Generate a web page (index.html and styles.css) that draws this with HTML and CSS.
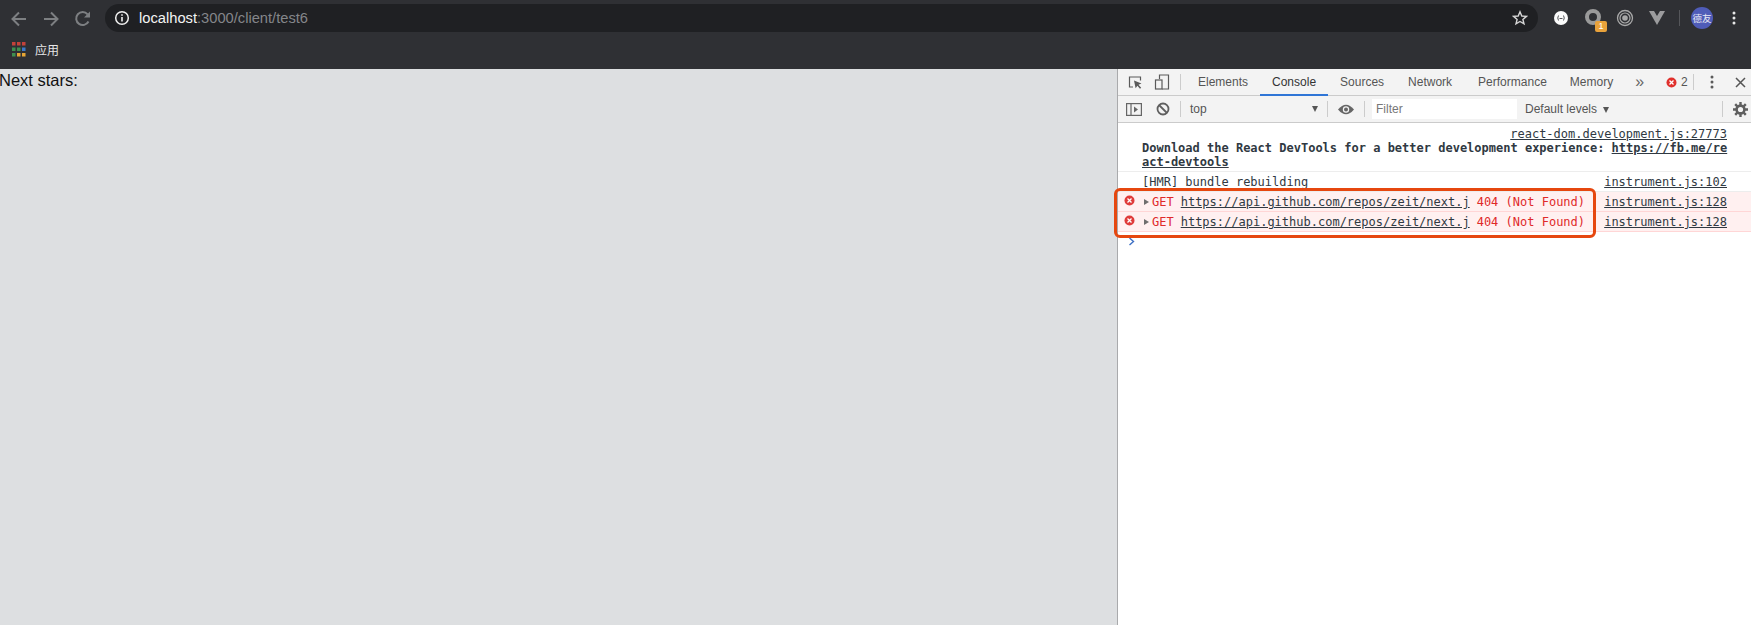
FILE: index.html
```html
<!DOCTYPE html>
<html lang="zh">
<head>
<meta charset="utf-8">
<title>localhost:3000/client/test6</title>
<link rel="stylesheet" href="styles.css">
</head>
<body>
<header class="chrome">
  <div class="toolbar">
    <svg class="nav nav-back" width="20" height="20" viewBox="0 0 20 20"><path d="M17 10H4M10 3.500L3.500 10l6.500 6.500" fill="none" stroke="#7d7f82" stroke-width="2"/></svg>
    <svg class="nav nav-fwd" width="20" height="20" viewBox="0 0 20 20"><path d="M3 10h13M10 3.500l6.500 6.500-6.500 6.500" fill="none" stroke="#7d7f82" stroke-width="2"/></svg>
    <svg class="nav nav-reload" width="20" height="20" viewBox="0 0 20 20"><path d="M15.500 12.500A6.500 6.500 0 1 1 14.600 5.300" fill="none" stroke="#7d7f82" stroke-width="2"/><path d="M17 2.500V8.500H11Z" fill="#7d7f82"/></svg>
    <div class="omnibox">
      <svg class="info" width="16" height="16" viewBox="0 0 16 16"><circle cx="8" cy="8" r="6.300" fill="none" stroke="#f0f0f0" stroke-width="1.500"/><path d="M8 7v4.500M8 4.300v1.500" stroke="#f0f0f0" stroke-width="1.600"/></svg>
      <span class="url"><span class="host">localhost</span>:3000/client/test6</span>
      <svg class="star" width="16" height="16" viewBox="0 0 16 16"><path d="M8 1.800l1.800 4.200 4.600.4-3.500 3 1.100 4.500L8 11.500l-4 2.400 1.100-4.500-3.500-3 4.600-.4z" fill="none" stroke="#d6d6d6" stroke-width="1.400"/></svg>
    </div>
    <div class="extensions">
      <svg class="ext" width="16" height="16" viewBox="0 0 16 16"><circle cx="8" cy="8" r="7" fill="#fbfbfb"/><path d="M5.500 5.500Q4 8 5.500 10.500M10.500 5.500Q12 8 10.500 10.500M6.500 8.500h3" fill="none" stroke="#55565a" stroke-width="1"/></svg>
      <span class="ext ext-badge">
        <svg width="18" height="18" viewBox="0 0 18 18"><circle cx="8" cy="8" r="6" fill="none" stroke="#9a9a9a" stroke-width="4"/></svg>
        <span class="badge">1</span>
      </span>
      <svg class="ext ext-target" width="18" height="18" viewBox="0 0 18 18"><g fill="none" stroke="#a8a8a8"><circle cx="9" cy="9" r="7.500" stroke-width="1.300"/><circle cx="9" cy="9" r="5" stroke-width="1.200"/></g><circle cx="9" cy="9" r="2.800" fill="#a8a8a8"/></svg>
      <svg class="ext" width="18" height="16" viewBox="0 0 18 16"><path d="M1 1h16L9 15z" fill="#9c9c9e"/><path d="M6 1h6L9 6z" fill="#2f3034"/></svg>
      <span class="ext-sep"></span>
      <span class="avatar">德友</span>
      <svg class="menu-dots" width="4" height="14" viewBox="0 0 4 14"><circle cx="2" cy="2" r="1.500" fill="#e8e8e8"/><circle cx="2" cy="7" r="1.500" fill="#e8e8e8"/><circle cx="2" cy="12" r="1.500" fill="#e8e8e8"/></svg>
    </div>
  </div>
  <div class="bookmarks">
    <svg class="apps" width="14" height="15" viewBox="0 0 14 15">
      <g fill="#c5423a"><rect x="0" y="0" width="3.500" height="3.500"/><rect x="5" y="0" width="3.500" height="3.500"/><rect x="10" y="0" width="3.500" height="3.500"/></g>
      <g fill="#3f8f4f"><rect x="0" y="5.500" width="3.500" height="3.500"/><rect x="5" y="5.500" width="3.500" height="3.500"/></g>
      <rect x="10" y="5.500" width="3.500" height="3.500" fill="#3b78c9"/>
      <rect x="0" y="11" width="3.500" height="3.500" fill="#3f8f4f"/>
      <g fill="#e6a635"><rect x="5" y="11" width="3.500" height="3.500"/><rect x="10" y="11" width="3.500" height="3.500"/></g>
    </svg>
    <span class="bookmark-label">应用</span>
  </div>
</header>
<main class="workspace">
  <section class="page">Next stars:</section>
  <section class="devtools">
    <div class="dt-tabs">
      <svg class="dt-icon icon-inspect" width="16" height="16" viewBox="0 0 16 16"><path d="M6 13H2.500V3h11v3.500" fill="none" stroke="#5a5a5a" stroke-width="1.200"/><path d="M7 6.500l7.500 3-3 1.300 2.700 3-1.200 1-2.600-3-1.800 2.500z" fill="#5a5a5a"/></svg>
      <svg class="dt-icon icon-device" width="16" height="16" viewBox="0 0 16 16"><path d="M5.500 5V1h9v14H8" fill="none" stroke="#5a5a5a" stroke-width="1.200"/><rect x="1.500" y="6" width="6.500" height="9" fill="none" stroke="#5a5a5a" stroke-width="1.200"/></svg>
      <span class="dt-sep sep-tabs"></span>
      <span class="tab tab-elements">Elements</span>
      <span class="tab tab-active">Console</span>
      <span class="tab">Sources</span>
      <span class="tab">Network</span>
      <span class="tab tab-perf">Performance</span>
      <span class="tab">Memory</span>
      <span class="more">»</span>
      <span class="err-count">
        <svg width="11" height="11" viewBox="0 0 11 11"><circle cx="5.500" cy="5.500" r="5" fill="#e0302c"/><path d="M3.500 3.500l4 4M7.500 3.500l-4 4" stroke="#fff" stroke-width="1.300"/></svg>
        2
      </span>
      <span class="dt-sep"></span>
      <svg class="dt-kebab" width="4" height="14" viewBox="0 0 4 14"><circle cx="2" cy="2" r="1.500" fill="#5a5a5a"/><circle cx="2" cy="7" r="1.500" fill="#5a5a5a"/><circle cx="2" cy="12" r="1.500" fill="#5a5a5a"/></svg>
      <svg class="dt-close" width="11" height="11" viewBox="0 0 11 11"><path d="M1 1l9 9M10 1l-9 9" stroke="#555" stroke-width="1.500"/></svg>
    </div>
    <div class="dt-bar">
      <svg class="bar-sidebar" width="16" height="13" viewBox="0 0 16 13"><rect x=".6" y=".6" width="14.800" height="11.800" fill="none" stroke="#666" stroke-width="1.200"/><path d="M5 1v11" stroke="#666" stroke-width="1.200"/><path d="M8 3.500l4 3-4 3z" fill="#666"/></svg>
      <svg class="bar-clear" width="14" height="14" viewBox="0 0 14 14"><circle cx="7" cy="7" r="5.500" fill="none" stroke="#5f5f5f" stroke-width="1.800"/><path d="M3 3l8 8" stroke="#5f5f5f" stroke-width="1.800"/></svg>
      <span class="dt-sep"></span>
      <div class="context"><span>top</span><span class="caret caret-context"></span></div>
      <span class="dt-sep"></span>
      <svg class="bar-eye" width="16" height="11" viewBox="0 0 16 11"><path d="M0 5.500Q8-4 16 5.500 8 15 0 5.500z" fill="#666"/><circle cx="8" cy="5.500" r="3.200" fill="#f3f3f3"/><circle cx="8" cy="5.500" r="2" fill="#666"/></svg>
      <span class="dt-sep"></span>
      <div class="filter">Filter</div>
      <div class="levels">Default levels<span class="caret"></span></div>
      <span class="dt-sep sep-gear"></span>
      <svg class="bar-gear" width="15" height="15" viewBox="0 0 15 15"><circle cx="7.500" cy="7.500" r="3.900" fill="none" stroke="#5f5f5f" stroke-width="2.600"/><path d="M7.500 0v3M7.500 12v3M0 7.500h3M12 7.500h3M2.200 2.200l2.100 2.100M10.700 10.700l2.100 2.100M12.800 2.200l-2.100 2.100M4.300 10.700l-2.100 2.100" stroke="#5f5f5f" stroke-width="2.400"/></svg>
    </div>
    <div class="console">
      <div class="msg msg-react">
        <div class="src-line"><a class="link">react-dom.development.js:27773</a></div>
        <div class="react-text"><b>Download the React DevTools for a better development experience: <a class="link">https://fb.me/re<br>act-devtools</a></b></div>
      </div>
      <div class="msg msg-log">
        <span class="msg-body">[HMR] bundle rebuilding</span>
        <a class="link">instrument.js:102</a>
      </div>
      <div class="msg msg-error">
        <svg class="err-icon" width="11" height="11" viewBox="0 0 11 11"><circle cx="5.500" cy="5.500" r="5" fill="#df3b3a"/><path d="M3.500 3.500l4 4M7.500 3.500l-4 4" stroke="#fff" stroke-width="1.300"/></svg>
        <span class="tri"></span>
        <span class="msg-body"><span class="get">GET</span><a class="link link-url">https://api.github.com/repos/zeit/next.j</a><span class="status">404 (Not Found)</span></span>
        <a class="link">instrument.js:128</a>
      </div>
      <div class="msg msg-error">
        <svg class="err-icon" width="11" height="11" viewBox="0 0 11 11"><circle cx="5.500" cy="5.500" r="5" fill="#df3b3a"/><path d="M3.500 3.500l4 4M7.500 3.500l-4 4" stroke="#fff" stroke-width="1.300"/></svg>
        <span class="tri"></span>
        <span class="msg-body"><span class="get">GET</span><a class="link link-url">https://api.github.com/repos/zeit/next.j</a><span class="status">404 (Not Found)</span></span>
        <a class="link">instrument.js:128</a>
      </div>
      <div class="prompt"><svg width="7" height="9" viewBox="0 0 7 9"><path d="M1.500 1l4 3.500-4 3.500" fill="none" stroke="#3d6fc4" stroke-width="1.400"/></svg></div>
      <div class="annotation"></div>
    </div>
  </section>
</main>
</body>
</html>
```
FILE: styles.css
```css
* { box-sizing: border-box; }
html, body { margin: 0; height: 100%; overflow: hidden; }
body { width: 1751px; height: 625px; display: flex; flex-direction: column; font-family: "Liberation Sans", Arial, sans-serif; background: #dddfe1; }

.chrome { height: 69px; background: #2f3034; flex: none; }
.toolbar { height: 37px; display: flex; align-items: center; }
.nav { flex: none; }
.nav-back { margin-left: 9px; }
.nav-fwd { margin-left: 12px; }
.nav-reload { margin-left: 12px; }
.omnibox { margin-left: 12px; width: 1433px; height: 28px; margin-top: -1px; border-radius: 14px; background: #1f2023; display: flex; align-items: center; padding: 0 10px 0 9px; }
.info { flex: none; }
.url { margin-left: 9px; font-size: 14.700px; color: #84868a; white-space: nowrap; }
.host { color: #f4f4f4; }
.star { margin-left: auto; }
.extensions { flex: 1; display: flex; align-items: center; padding-left: 15px; margin-top: -1px; }
.ext { flex: none; margin-right: 14px; display: block; }
.ext-badge { position: relative; width: 18px; height: 18px; margin-right: 13px; margin-left: 2px; }
.ext-badge svg { display: block; }
.badge { position: absolute; left: 10px; top: 12px; width: 12px; height: 11px; border-radius: 2px; background: #e9a23b; color: #fff; font-size: 9px; line-height: 11px; text-align: center; }
.ext-sep { width: 1px; height: 16px; background: #55565a; margin-left: -1px; }
.avatar { width: 22px; height: 22px; margin-left: 11px; border-radius: 50%; background: #4f5cb8; color: #e8e8f4; font: 9.500px/22px "Noto Sans CJK SC", sans-serif; text-align: center; flex: none; }
.menu-dots { margin-left: 19px; }

.bookmarks { height: 32px; display: flex; align-items: center; padding-left: 12px; padding-bottom: 7px; }
.bookmark-label { margin-left: 9px; font: 12px "Noto Sans CJK SC", sans-serif; color: #e6e6e6; }

.workspace { flex: 1; display: flex; min-height: 0; }
.page { width: 1117px; font-size: 16.500px; line-height: 18px; padding-top: 2px; text-indent: -1px; color: #111; flex: none; }
.devtools { flex: 1; background: #fff; border-left: 1px solid #a9aaac; display: flex; flex-direction: column; min-width: 0; }

.dt-tabs { height: 27px; background: #f3f3f3; border-bottom: 1px solid #cbcbcb; display: flex; align-items: center; font-size: 12px; color: #555; flex: none; }
.dt-icon { flex: none; }
.icon-inspect { margin-left: 9px; }
.icon-device { margin-left: 11px; }
.dt-sep { width: 1px; height: 16px; background: #cccccc; flex: none; }
.sep-tabs { margin-left: 10px; }
.tab { height: 27px; line-height: 26px; padding: 0 12px; white-space: nowrap; border-bottom: 2px solid transparent; margin-bottom: -1px; }
.tab-elements { margin-left: 5px; }
.tab-perf { margin-left: 2px; margin-right: -1px; }
.tab-active { color: #333; border-bottom-color: #2f75d6; }
.more { margin-left: 10px; font-size: 16px; line-height: 20px; color: #666; }
.err-count { margin-left: 22px; display: flex; align-items: center; gap: 4px; font-size: 12px; margin-right: 5px; }
.dt-kebab { margin-left: 16px; }
.dt-close { margin-left: 21px; }

.dt-bar { height: 27px; background: #f3f3f3; border-bottom: 1px solid #cbcbcb; display: flex; align-items: center; font-size: 12px; color: #555; flex: none; }
.bar-sidebar { margin-left: 8px; margin-right: 14px; }
.bar-clear { margin-right: 10px; }
.context { width: 146px; padding: 0 9px; display: flex; align-items: center; justify-content: space-between; }
.caret { width: 0; height: 0; border-left: 3.500px solid transparent; border-right: 3.500px solid transparent; border-top: 6px solid #555; display: inline-block; margin-left: 6px; }
.bar-eye { margin: 0 10px; }
.filter { margin-left: 7px; width: 145px; height: 20px; background: #fff; padding: 0 4px; line-height: 20px; color: #777; }
.levels { margin-left: 8px; white-space: nowrap; width: 197px; }
.sep-gear { margin-left: 0; }
.bar-gear { margin-left: 10px; }

.console { flex: 1; position: relative; font-family: "DejaVu Sans Mono", "Liberation Mono", monospace; font-size: 12px; line-height: 14px; color: #303942; }
.link { color: #303942; text-decoration: underline; }
.msg { display: flex; padding: 0 24px 0 24px; border-bottom: 1px solid #ededed; position: relative; }
.msg-react { display: block; height: 49px; padding-top: 4px; }
.src-line { text-align: right; }
.react-text { white-space: nowrap; }
.msg-log, .msg-error { height: 20px; padding-top: 3px; justify-content: space-between; }
.msg-log .msg-body { white-space: nowrap; }
.msg-error { background: #fff0f0; border-bottom-color: #ffd6d6; color: #e02a2a; }
.err-icon { position: absolute; left: 6px; top: 3px; }
.tri { position: absolute; left: 26px; top: 7px; width: 0; height: 0; border-top: 3.500px solid transparent; border-bottom: 3.500px solid transparent; border-left: 5px solid #6e6e6e; }
.msg-error .msg-body { padding-left: 10px; white-space: nowrap; }
.get { margin-right: 7px; }
.status { margin-left: 7px; }
.prompt { padding: 5px 0 0 10px; line-height: 9px; }
.prompt svg { display: block; }
.annotation { position: absolute; left: -4px; top: 65px; width: 482px; height: 50px; border: 3px solid #e6470f; border-radius: 6px; pointer-events: none; }
```
